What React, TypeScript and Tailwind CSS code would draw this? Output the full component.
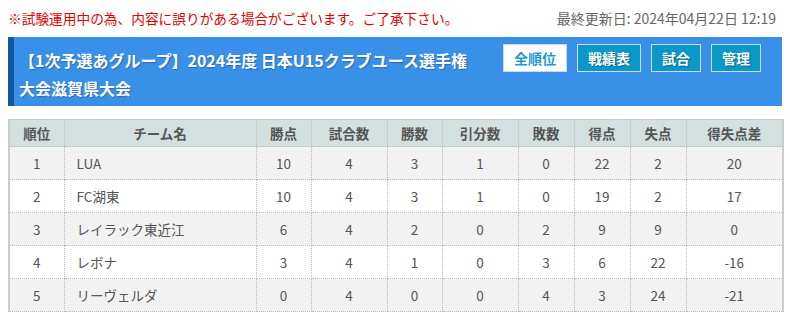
import React from 'react';

type Row = {
  rank: number;
  team: string;
  points: number;
  played: number;
  won: number;
  drawn: number;
  lost: number;
  gf: number;
  ga: number;
  diff: number;
};

const ROWS: Row[] = [
  { rank: 1, team: 'LUA', points: 10, played: 4, won: 3, drawn: 1, lost: 0, gf: 22, ga: 2, diff: 20 },
  { rank: 2, team: 'FC湖東', points: 10, played: 4, won: 3, drawn: 1, lost: 0, gf: 19, ga: 2, diff: 17 },
  { rank: 3, team: 'レイラック東近江', points: 6, played: 4, won: 2, drawn: 0, lost: 2, gf: 9, ga: 9, diff: 0 },
  { rank: 4, team: 'レボナ', points: 3, played: 4, won: 1, drawn: 0, lost: 3, gf: 6, ga: 22, diff: -16 },
  { rank: 5, team: 'リーヴェルダ', points: 0, played: 4, won: 0, drawn: 0, lost: 4, gf: 3, ga: 24, diff: -21 },
];

const HEADERS = ['順位', 'チーム名', '勝点', '試合数', '勝数', '引分数', '敗数', '得点', '失点', '得失点差'];
const WIDTHS = ['w-[55px]', 'w-[192px]', 'w-[55px]', 'w-[76px]', 'w-[55px]', 'w-[76px]', 'w-[56px]', 'w-[56px]', 'w-[56px]', 'w-[97px]'];

const cell = 'border border-dotted border-[#bbb] text-center';

export default function App() {
  return (
    <div className="w-[790px] h-[326px] bg-white font-['Noto_Sans_CJK_JP','Noto_Sans',sans-serif] overflow-hidden">
      <div className="flex items-center justify-between h-[37px] pl-2 pr-[14px]">
        <span className="text-[#e60000] text-[13.7px]">※試験運用中の為、内容に誤りがある場合がございます。ご了承下さい。</span>
        <span className="text-[#666] text-[14px]">最終更新日: 2024年04月22日 12:19</span>
      </div>

      <div className="mx-2 flex items-start justify-between bg-[#3890e9] border-l-[6px] border-[#11589f] pl-[5px] pr-[21px] pt-[9px] pb-[4px]">
        <h1 className="w-[462px] text-white font-bold text-[16px] leading-[28px] [text-shadow:1px_1px_1px_rgba(0,0,0,0.25)]">
          【1次予選あグループ】2024年度 日本U15クラブユース選手権大会滋賀県大会
        </h1>
        <div className="flex gap-[10px] -mt-[2px]">
          <button className="h-[28px] px-[10px] bg-white border border-[#cfd8de] text-[#1e98cf] font-bold text-[14px]">
            全順位
          </button>
          {['戦績表', '試合', '管理'].map(label => (
            <button
              key={label}
              className="h-[28px] px-[10px] bg-[#0b98c8] border border-[#c9dfe9] text-white font-bold text-[14px] [text-shadow:1px_1px_1px_rgba(0,0,0,0.35)]"
            >
              {label}
            </button>
          ))}
        </div>
      </div>

      <div className="mx-2 mt-[13px]">
        <table className="w-[774px] table-fixed border-collapse border-x-2 border-t border-solid border-x-[#ccc] border-t-[#ccc] text-[13.5px] text-[#555]">
          <colgroup>
            {WIDTHS.map((w, i) => (
              <col key={i} className={w} />
            ))}
          </colgroup>
          <thead>
            <tr className="h-[27px] bg-[#d4dfdf]">
              {HEADERS.map(h => (
                <th key={h} className={`${cell} font-bold`}>
                  {h}
                </th>
              ))}
            </tr>
          </thead>
          <tbody>
            {ROWS.map((r, i) => (
              <tr key={r.rank} className={`h-[33px] ${i % 2 === 0 ? 'bg-[#f2f2f2]' : 'bg-white'}`}>
                <td className={cell}>{r.rank}</td>
                <td className="border border-dotted border-[#bbb] text-left pl-[12px]">{r.team}</td>
                <td className={cell}>{r.points}</td>
                <td className={cell}>{r.played}</td>
                <td className={cell}>{r.won}</td>
                <td className={cell}>{r.drawn}</td>
                <td className={cell}>{r.lost}</td>
                <td className={cell}>{r.gf}</td>
                <td className={cell}>{r.ga}</td>
                <td className={cell}>{r.diff}</td>
              </tr>
            ))}
          </tbody>
        </table>
      </div>
    </div>
  );
}
